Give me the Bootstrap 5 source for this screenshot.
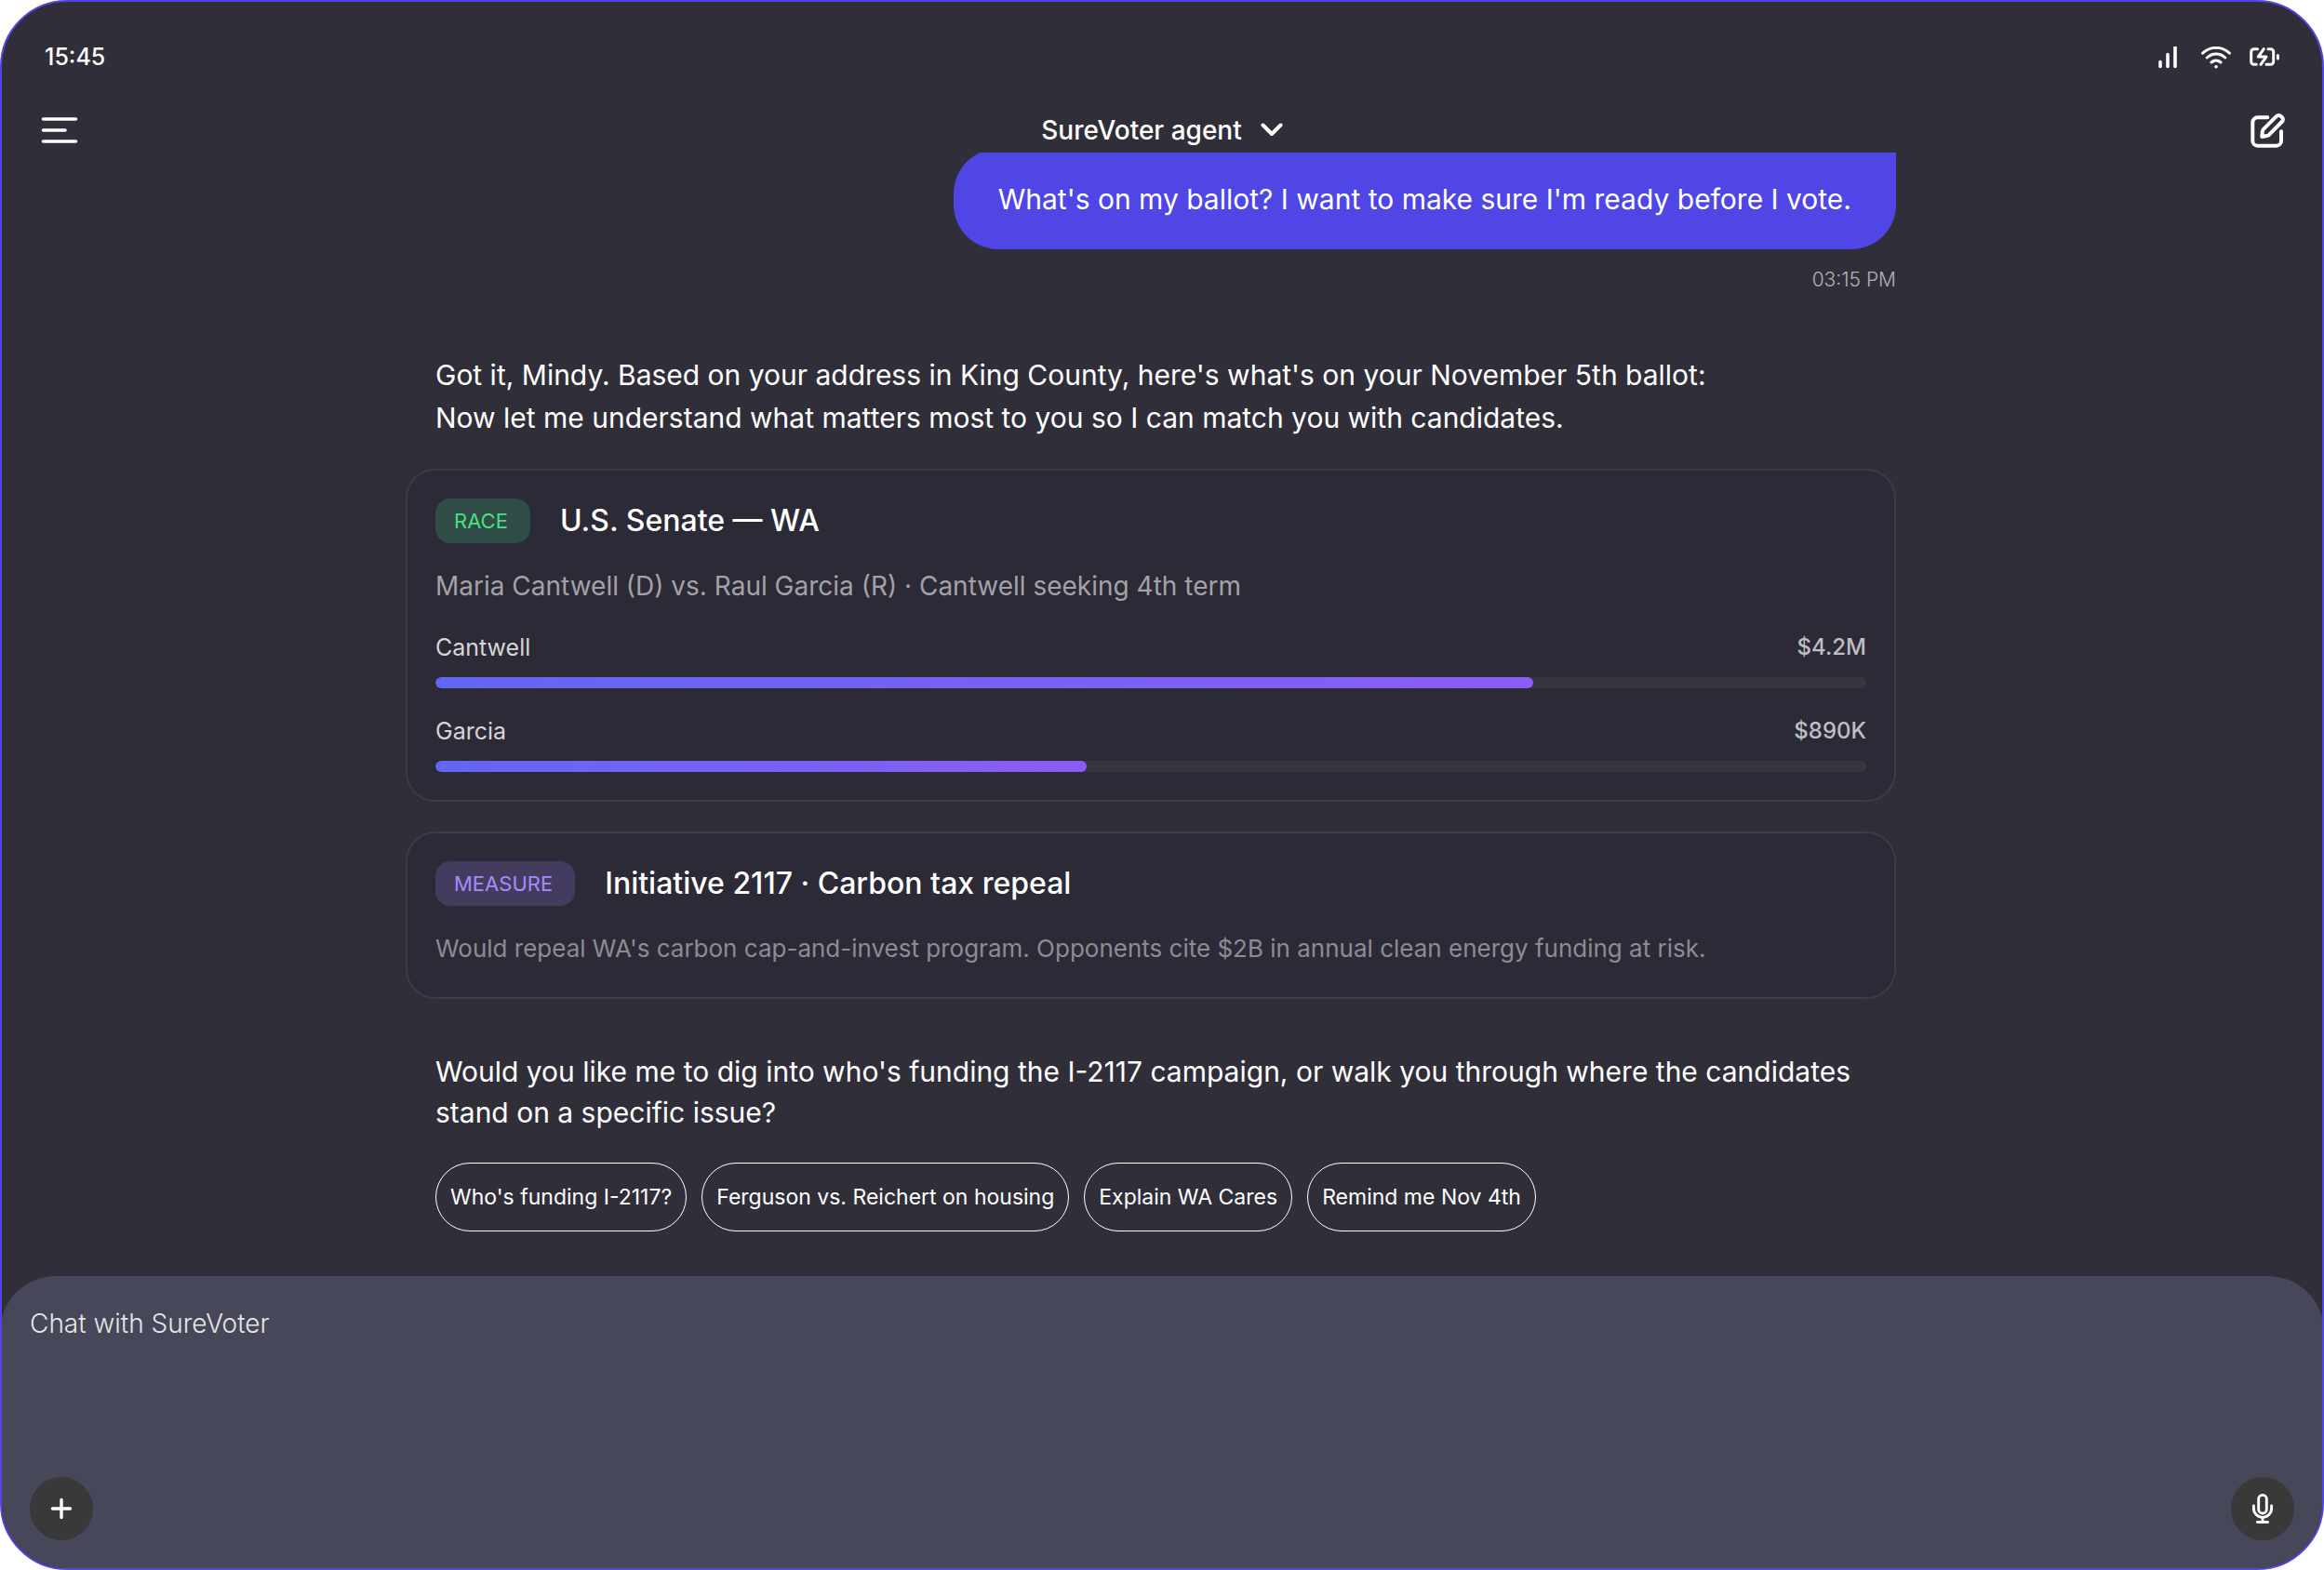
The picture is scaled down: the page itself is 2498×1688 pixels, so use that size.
<!DOCTYPE html>
<html lang="en">
<head>
<meta charset="utf-8">
<meta name="viewport" content="width=device-width, initial-scale=1">
<title>SureVoter agent</title>
<link href="https://cdn.jsdelivr.net/npm/bootstrap@5.3.0/dist/css/bootstrap.min.css" rel="stylesheet">
<style>
  body { font-family: Inter, "Liberation Sans", sans-serif; background: #fff; color: #fff; }
  button { color: inherit; }
  svg { display: block; fill: none; stroke: #fff; stroke-linecap: round; stroke-linejoin: round; }
  .app-frame { min-height: 100vh; background: #302f39; border: 2px solid #4f46e5; border-radius: 72px; overflow: hidden; }
  .status-row { padding: 36px 46px 0; height: 84px; font-size: 25px; font-weight: 500; }
  .status-icons { gap: 20px; }
  .top-row { padding: 30px 38px 0; height: 78px; }
  .agent-switch { font-size: 28px; line-height: 48px; gap: 20px; font-weight: 500; }
  .thread { overflow: hidden; padding: 0 24px 48px 0; }
  .thread-column { width: 100%; max-width: 1602px; }
  .bubble { background: #4f46e5; border-radius: 48px 0 48px 48px; margin-top: -4px; padding: 30px 48px; font-size: 30px; line-height: 48px; }
  .sent-at { color: #b2b2b6; font-size: 21px; line-height: 34px; margin-top: 16px; font-weight: 300; }
  .reply { font-size: 30px; line-height: 46px; padding: 0 32px; margin-top: 62px; }
  .follow-up { line-height: 44px; margin-top: 56px; }
  .ballot-card { background: #2c2a37; border: 2px solid #3c3b48; border-radius: 32px; padding: 30px; margin-top: 32px; color: inherit; }
  .ballot-title { font-size: 32px; line-height: 48px; font-weight: 500; }
  .ballot-head { gap: 32px; }
  .kind { border-radius: 16px; padding: 0 24px 0 20px; font-size: 22px; line-height: 48px; }
  .kind-race { background: #304c46; color: #4ade80; }
  .kind-measure { background: #443c5f; color: #a78bfa; }
  .summary { font-size: 28px; line-height: 44px; margin-top: 24px; color: #a3a2a7; }
  .summary-dim { font-size: 26px; color: #8d8c94; }
  .fund { margin-top: 28px; font-size: 25px; line-height: 32px; color: #d6d6d6; }
  .fund + .fund { margin-top: 30px; }
  .fund-amount { color: #bfbfc3; font-size: 24px; font-weight: 500; }
  .fund .progress { height: 12px; margin-top: 16px; border-radius: 6px; background: #363540; }
  .fund .progress-bar { border-radius: 6px; background: linear-gradient(90deg, #6366f1, #8b5cf6); }
  .chips { gap: 16px; padding: 0 32px; margin-top: 32px; }
  .chip { border: 1px solid #fff; border-radius: 37px; height: 74px; padding: 0 15px; font-size: 23px; }
  .chip:hover { border-color: #fff; background: #3c3b48; color: #fff; }
  .composer { background: #47475a; border-radius: 60px 60px 0 0; min-height: 314px; margin: 0 -2px; padding: 28px 32px 30px; }
  .composer textarea, .composer textarea:focus { background: transparent; border: 0; padding: 0; color: #fff; font-size: 28px; line-height: 46px; resize: none; box-shadow: none; font-weight: 300; }
  .composer textarea::placeholder { color: #e6e6e6; opacity: 1; }
  .round-btn, .round-btn:hover { width: 68px; height: 68px; background: #393939; }
</style>
</head>
<body>
<div class="app-frame d-flex flex-column">
  <div class="status-row d-flex align-items-center justify-content-between">
    <span>15:45</span>
    <div class="status-icons d-flex align-items-center">
      <svg width="28" height="24" viewBox="0 0 28 24" stroke-width="3.6" aria-hidden="true"><path d="M4 16.5v5M12 8.5v13M20 .8v20.700"/></svg>
      <svg width="32" height="24" viewBox="0 0 32 24" stroke-width="3" aria-hidden="true"><path d="M1.6 7.2C10-.6 22-.6 30.4 7.2M6.3 12c5.6-5.2 13.8-5.2 19.4 0M11 17c3-2.600 7-2.600 10 0"/><path d="M16 21.700h.01" stroke-width="3.600"/></svg>
      <svg width="32" height="24" viewBox="0 0 32 24" stroke-width="3" aria-hidden="true"><path d="M8.500 2.700H4.700a3 3 0 0 0-3 3v10.600a3 3 0 0 0 3 3h2.600M20 2.700h2.700a3 3 0 0 1 3 3v10.600a3 3 0 0 1-3 3H18M30.400 9.500v3.500M15.300 2.700l-6 8.300h8.700l-6 8.300"/></svg>
    </div>
  </div>
  <header class="top-row d-flex align-items-center justify-content-between">
    <button type="button" class="btn p-0 border-0" aria-label="Menu">
      <svg width="44" height="44" viewBox="0 0 44 44" stroke-width="3.600"><path d="M6.500 10h35M6.500 22h23.500M6.500 34h35"/></svg>
    </button>
    <button type="button" class="agent-switch btn p-0 border-0 text-white d-flex align-items-center">
      SureVoter agent
      <svg width="24" height="24" viewBox="0 0 24 24" stroke-width="4" aria-hidden="true"><path d="M2.500 6.500l9.500 9.500 9.500-9.500"/></svg>
    </button>
    <button type="button" class="btn p-0 border-0" aria-label="New chat">
      <svg width="44" height="44" viewBox="0 0 44 44" stroke-width="4"><path d="M23.300 8.300H12.600a5.300 5.300 0 0 0-5.300 5.300v19.800a5.300 5.300 0 0 0 5.300 5.300h20.100a5.300 5.300 0 0 0 5.300-5.300V23.300"/><path d="M17.300 29l.5-5.600a4 4 0 0 1 1.200-2.500L33 6.900a3.200 3.200 0 0 1 4.600 0l1.300 1.300a3.200 3.200 0 0 1 0 4.600L25 26.800a4 4 0 0 1-2.400 1.200z"/></svg>
    </button>
  </header>

  <main class="thread d-flex justify-content-center">
    <div class="thread-column d-flex flex-column">
      <div class="bubble align-self-end">What's on my ballot? I want to make sure I'm ready before I vote.</div>
      <div class="sent-at text-end">03:15 PM</div>

      <div class="reply">
        Got it, Mindy. Based on your address in King County, here's what's on your November 5th ballot:<br>
        Now let me understand what matters most to you so I can match you with candidates.
      </div>

      <section class="ballot-card card">
        <div class="ballot-head d-flex align-items-center">
          <span class="kind kind-race">RACE</span>
          <h2 class="ballot-title mb-0">U.S. Senate — WA</h2>
        </div>
        <p class="summary mb-0">Maria Cantwell (D) vs. Raul Garcia (R) · Cantwell seeking 4th term</p>
        <div class="fund">
          <div class="d-flex justify-content-between"><span>Cantwell</span><span class="fund-amount">$4.2M</span></div>
          <div class="progress" role="progressbar" aria-label="Cantwell funding"><div class="progress-bar" style="width:76.7%"></div></div>
        </div>
        <div class="fund">
          <div class="d-flex justify-content-between"><span>Garcia</span><span class="fund-amount">$890K</span></div>
          <div class="progress" role="progressbar" aria-label="Garcia funding"><div class="progress-bar" style="width:45.5%"></div></div>
        </div>
      </section>

      <section class="ballot-card card">
        <div class="ballot-head d-flex align-items-center">
          <span class="kind kind-measure">MEASURE</span>
          <h2 class="ballot-title mb-0">Initiative 2117 · Carbon tax repeal</h2>
        </div>
        <p class="summary summary-dim mb-0">Would repeal WA's carbon cap-and-invest program. Opponents cite $2B in annual clean energy funding at risk.</p>
      </section>

      <div class="reply follow-up">Would you like me to dig into who's funding the I-2117 campaign, or walk you through where the candidates stand on a specific issue?</div>
      <div class="chips d-flex flex-wrap">
        <button type="button" class="chip btn text-white">Who's funding I-2117?</button>
        <button type="button" class="chip btn text-white">Ferguson vs. Reichert on housing</button>
        <button type="button" class="chip btn text-white">Explain WA Cares</button>
        <button type="button" class="chip btn text-white">Remind me Nov 4th</button>
      </div>
    </div>
  </main>

  <form class="composer d-flex flex-column mt-auto">
    <textarea class="form-control flex-grow-1" aria-label="Message" placeholder="Chat with SureVoter"></textarea>
    <div class="d-flex justify-content-between">
      <button type="button" class="round-btn btn rounded-circle p-0 border-0 d-flex align-items-center justify-content-center" aria-label="Add attachment">
        <svg width="40" height="40" viewBox="-20 -20 40 40" stroke-width="3.400"><path d="M-9.500 0h19M0-9.500v19"/></svg>
      </button>
      <button type="button" class="round-btn btn rounded-circle p-0 border-0 d-flex align-items-center justify-content-center" aria-label="Voice input">
        <svg width="40" height="40" viewBox="-20 -20 40 40" stroke-width="2.900"><rect x="-4.300" y="-14.600" width="8.600" height="19.600" rx="4.300"/><path d="M-9.600-3v2.800a9.600 9.600 0 0 0 19.200 0V-3M0 9.500v5M-5.600 14.500h11.200"/></svg>
      </button>
    </div>
  </form>
</div>
<script src="https://cdn.jsdelivr.net/npm/bootstrap@5.3.0/dist/js/bootstrap.bundle.min.js"></script>
</body>
</html>
